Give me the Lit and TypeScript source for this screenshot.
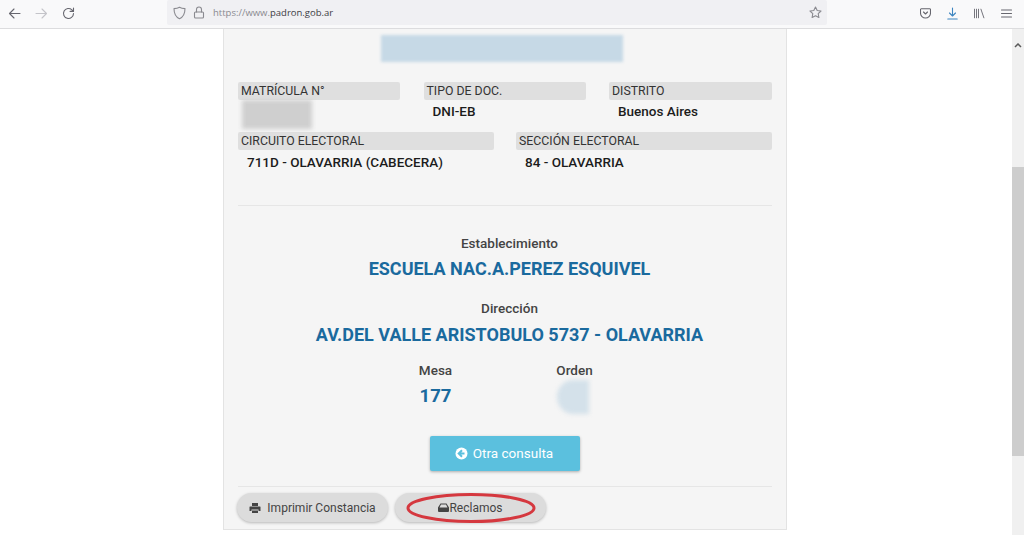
import { LitElement, html, css, svg } from "lit";
import { customElement } from "lit/decorators.js";

const icon = (w: number, h: number, vb: string, body: unknown, cls = "") =>
  html`<svg class=${cls} width=${w} height=${h} viewBox=${vb} fill="none" stroke="currentColor" stroke-width="1.1" stroke-linecap="round" stroke-linejoin="round">${body}</svg>`;

@customElement("app-root")
export class AppRoot extends LitElement {
  static styles = css`
    :host {
      display: flex;
      flex-direction: column;
      width: 1024px;
      height: 535px;
      overflow: hidden;
      background: #fff;
      font-family: Roboto, "Liberation Sans", sans-serif;
      color: #333;
    }
    .toolbar {
      height: 29px;
      box-sizing: border-box;
      flex: none;
      display: flex;
      align-items: flex-start;
      background: #f9f9fa;
      border-bottom: 1px solid #dcdcde;
      color: #66666e;
    }
    .nav {
      width: 167px;
      flex: none;
      height: 27px;
      display: flex;
      align-items: center;
      padding: 0 0 1px 8px;
      box-sizing: border-box;
      gap: 14px;
    }
    .nav .dim { color: #c4c4c9; display: flex; }
    .url {
      width: 660px;
      height: 25px;
      flex: none;
      box-sizing: border-box;
      background: #f0f0f3;
      border-radius: 2px;
      display: flex;
      align-items: center;
      padding: 0 5px 0 6px;
      font-family: "Open Sans", "Liberation Sans", sans-serif;
      font-size: 9.5px;
      color: #8a8a90;
    }
    .url svg { flex: none; margin-right: 7px; }
    .url b { font-weight: 400; color: #3c3c44; }
    .url .addr { flex: 1; margin-left: 1px; }
    .url .star { margin-right: 0; }
    .tools {
      flex: 1;
      height: 27px;
      display: flex;
      align-items: center;
      padding: 0 0 1px 93px;
      box-sizing: border-box;
      gap: 16px;
    }
    .tools span { display: flex; }
    .tools .blue { color: #3d85c0; }
    .main { flex: 1; display: flex; min-height: 0; }
    .page { flex: 1; display: flex; min-width: 0; padding-left: 223px; }
    .card {
      width: 564px;
      height: 501px;
      box-sizing: border-box;
      background: #f5f5f5;
      border: 1px solid #e3e3e3;
      border-top: 0;
      padding: 6px 14px 0 14px;
      display: flex;
      flex-direction: column;
    }
    .nameblur {
      width: 242px;
      height: 27px;
      flex: none;
      align-self: center;
      margin-left: -7px;
      background: #c6d9e6;
      filter: blur(1.5px);
    }
    .row3 {
      display: grid;
      grid-template-columns: 162px 162px 163px;
      column-gap: 23.5px;
      margin: 20px 0 0 0;
      height: 50px;
    }
    .row3 .value { margin-top: 1px; }
    .row2 {
      display: grid;
      grid-template-columns: 256px 256px;
      column-gap: 22px;
      height: 50px;
    }
    .label {
      height: 18px;
      line-height: 18px;
      background: #dfdfdf;
      border-radius: 2px;
      font-size: 12.3px;
      color: #333;
      padding-left: 3px;
      white-space: nowrap;
    }
    .value {
      font-size: 13.5px;
      font-weight: 500;
      line-height: 20px;
      margin-top: 2px;
      padding-left: 9px;
      color: #1c1c1c;
      white-space: nowrap;
    }
    .numblur {
      width: 70px;
      height: 29px;
      margin: 0 0 0 4px;
      background: #cfcfcf;
      filter: blur(2px);
    }
    hr {
      border: 0;
      height: 1px;
      background: #e6e6e6;
      margin: 0;
      flex: none;
    }
    .h1 { margin-top: 23px; }
    .center {
      display: flex;
      flex-direction: column;
      align-items: center;
      padding-left: 9px;
    }
    .cap {
      font-size: 13.5px;
      font-weight: 500;
      line-height: 18px;
      color: #444;
    }
    .big {
      font-size: 18px;
      font-weight: 700;
      line-height: 24px;
      color: #1a6a9e;
      white-space: nowrap;
      margin-top: 5px;
    }
    .c1 { margin-top: 28px; }
    .c2 { margin-top: 18px; }
    .addr2 { margin-top: 6px; }
    .meta {
      display: grid;
      grid-template-columns: 100px 100px;
      column-gap: 39px;
      justify-content: center;
      margin-top: 14px;
      height: 67px;
    }
    .meta > div { display: flex; flex-direction: column; align-items: center; }
    .num { font-size: 18.5px; font-weight: 700; line-height: 24px; color: #1a6a9e; margin-top: 5px; }
    .ordenblur {
      width: 32px;
      height: 34px;
      margin: 1px 0 0 -4px;
      background: #d4e1ea;
      border-radius: 50% 0 0 50%;
      filter: blur(2px);
    }
    .primary {
      width: 150px;
      height: 35px;
      flex: none;
      margin: 8px 0 0 192px;
      background: #5bc0de;
      color: #fff;
      border: 0;
      border-radius: 2px;
      font: 400 13.5px Roboto, "Liberation Sans", sans-serif;
      display: flex;
      align-items: center;
      justify-content: center;
      gap: 5px;
      box-shadow: 0 1px 3px rgba(0, 0, 0, 0.3);
      padding: 0 2px 1px 0;
    }
    .h2 { margin-top: 15px; }
    .actions { display: flex; gap: 7px; margin: 6px 0 0 -1px; }
    .pill {
      width: 151px;
      height: 29px;
      box-sizing: border-box;
      border: 0;
      border-radius: 15px;
      background: #dcdcdc;
      color: #444;
      font: 400 12px Roboto, "Liberation Sans", sans-serif;
      display: flex;
      align-items: center;
      justify-content: center;
      gap: 6px;
      padding: 0;
      box-shadow: 0 1px 3px rgba(0, 0, 0, 0.25);
    }
    .reclamos { position: relative; gap: 0; }
    .ring {
      position: absolute;
      left: 11px;
      top: 0;
    }
    .scroll {
      width: 12px;
      flex: none;
      background: #f0f0f0;
      display: flex;
      flex-direction: column;
      align-items: center;
      color: #5a5a5a;
    }
    .arrow { height: 138px; flex: none; padding-top: 4px; box-sizing: border-box; }
    .thumb { width: 12px; height: 289px; flex: none; background: #cdcdcd; }
  `;

  render() {
    return html`
      <div class="toolbar">
        <div class="nav">
          ${icon(13, 13, "0 0 13 13", svg`<path d="M12 6.500H1.500M6 2L1.500 6.500 6 11"/>`)}
          <span class="dim">${icon(13, 13, "0 0 13 13", svg`<path d="M1 6.500h10.500M7 2l4.500 4.500L7 11"/>`)}</span>
          ${icon(13, 13, "0 0 13 13", svg`<path d="M11.500 6.500a5 5 0 1 1-1.600-3.700L11.500 4.400M11.500 1v3.400H8.100"/>`)}
        </div>
        <div class="url">
          ${icon(13, 14, "0 0 13 14", svg`<path d="M6.500 1.200C8 2.200 10 2.600 12 2.600c0 5-1.600 8.500-5.500 10.200C2.600 11.100 1 7.600 1 2.600c2 0 4-.4 5.500-1.400z"/>`)}
          ${icon(12, 13, "0 0 12 13", svg`<rect x="1.500" y="6" width="9" height="6" rx="1"/><path d="M3.500 6V3.500a2.500 2.500 0 0 1 5 0V6"/>`)}
          <span class="addr">https://www.<b>padron.gob.ar</b></span>
          ${icon(13, 13, "0 0 13 13", svg`<path d="M6.500 1l1.700 3.500 3.800.5-2.800 2.700.7 3.800-3.400-1.800-3.400 1.800.7-3.800L1 5l3.800-.5z"/>`, "star")}
        </div>
        <div class="tools">
          ${icon(11, 11, "0 0 11 11", svg`<path d="M1.300.8h8.400a.8.800 0 0 1 .8.800V5a5 5 0 0 1-10 0V1.600a.8.800 0 0 1 .8-.8z"/><path d="M3.500 4L5.500 6 7.500 4"/>`)}
          <span class="blue">${icon(11, 13, "0 0 11 13", svg`<path d="M5.500 1v8M2.500 6l3 3 3-3M.8 12h9.400"/>`)}</span>
          <span>${icon(11, 11, "0 0 11 11", svg`<path stroke-width="0.9" stroke-linecap="butt" d="M.5 .8v9.400M2.500 .8v9.400M4.500 .8v9.400M6.800 .8l3.200 9.400"/>`)}</span>
          <span>${icon(11, 11, "0 0 11 11", svg`<path d="M.5 2h10M.5 5.500h10M.5 9h10"/>`)}</span>
        </div>
      </div>
      <div class="main">
        <div class="page">
          <div class="card">
            <div class="nameblur"></div>
            <div class="row3">
              <div><div class="label">MATRÍCULA N°</div><div class="numblur"></div></div>
              <div><div class="label">TIPO DE DOC.</div><div class="value">DNI-EB</div></div>
              <div><div class="label">DISTRITO</div><div class="value">Buenos Aires</div></div>
            </div>
            <div class="row2">
              <div><div class="label">CIRCUITO ELECTORAL</div><div class="value">711D - OLAVARRIA (CABECERA)</div></div>
              <div><div class="label">SECCIÓN ELECTORAL</div><div class="value">84 - OLAVARRIA</div></div>
            </div>
            <hr class="h1" />
            <div class="center c1">
              <div class="cap">Establecimiento</div>
              <div class="big">ESCUELA NAC.A.PEREZ ESQUIVEL</div>
              <div class="cap c2">Dirección</div>
              <div class="big addr2">AV.DEL VALLE ARISTOBULO 5737 - OLAVARRIA</div>
            </div>
            <div class="meta">
              <div><div class="cap">Mesa</div><div class="num">177</div></div>
              <div><div class="cap">Orden</div><div class="ordenblur"></div></div>
            </div>
            <button class="primary">
              <svg width="13" height="13" viewBox="0 0 13 13"><circle cx="6.500" cy="6.500" r="6" fill="#fff"/><path d="M7 3.200L3.700 6.500 7 9.800M4 6.500h5.500" fill="none" stroke="#5bc0de" stroke-width="2"/></svg>
              Otra consulta
            </button>
            <hr class="h2" />
            <div class="actions">
              <button class="pill">
                <svg width="12" height="12" viewBox="0 0 12 12" fill="#444"><path d="M3 1h6v3H3zM1 4.500h10a.5.5 0 0 1 .5.500v4H9.500V7.500h-7V9H.5V5a.5.5 0 0 1 .5-.5zM3 8.500h6V11H3z"/></svg>
                Imprimir Constancia
              </button>
              <button class="pill reclamos">
                <svg width="11" height="9" viewBox="0 0 11 9" fill="#444"><path d="M2.500.5h6L11 4.500V8a1 1 0 0 1-1 1H1a1 1 0 0 1-1-1V4.500zM3 1.500L1.500 4.500h8L8 1.500z" fill-rule="evenodd"/></svg>Reclamos
                <svg class="ring" width="130" height="30" viewBox="0 0 130 30" fill="none"><ellipse cx="65" cy="15" rx="63" ry="13.500" stroke="#d5383f" stroke-width="3"/></svg>
              </button>
            </div>
          </div>
        </div>
        <div class="scroll">
          <div class="arrow">
            <svg width="8" height="5" viewBox="0 0 8 5" fill="none" stroke="currentColor" stroke-width="1.500"><path d="M1 4l3-3 3 3"/></svg>
          </div>
          <div class="thumb"></div>
        </div>
      </div>
    `;
  }
}
